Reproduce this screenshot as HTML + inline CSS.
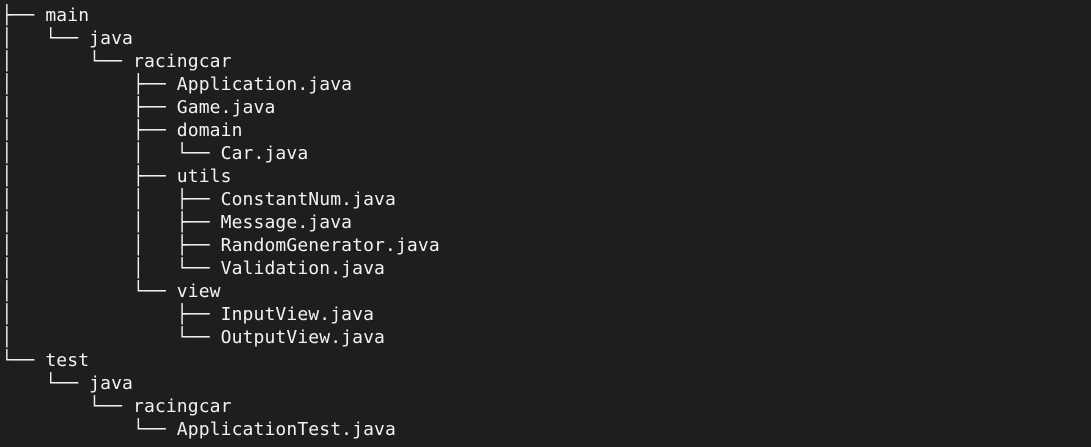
<!DOCTYPE html>
<html><head><meta charset="utf-8"><style>
html,body{margin:0;padding:0;background:#1e1e1e;width:1091px;height:447px;overflow:hidden}
pre{margin:0;padding:4px 0 0 1.5px;font-family:"DejaVu Sans Mono","Liberation Mono",monospace;font-size:18px;letter-spacing:0.12px;line-height:23px;color:#f2f2f2}
</style></head><body><pre>├── main
│   └── java
│       └── racingcar
│           ├── Application.java
│           ├── Game.java
│           ├── domain
│           │   └── Car.java
│           ├── utils
│           │   ├── ConstantNum.java
│           │   ├── Message.java
│           │   ├── RandomGenerator.java
│           │   └── Validation.java
│           └── view
│               ├── InputView.java
│               └── OutputView.java
└── test
    └── java
        └── racingcar
            └── ApplicationTest.java</pre></body></html>
